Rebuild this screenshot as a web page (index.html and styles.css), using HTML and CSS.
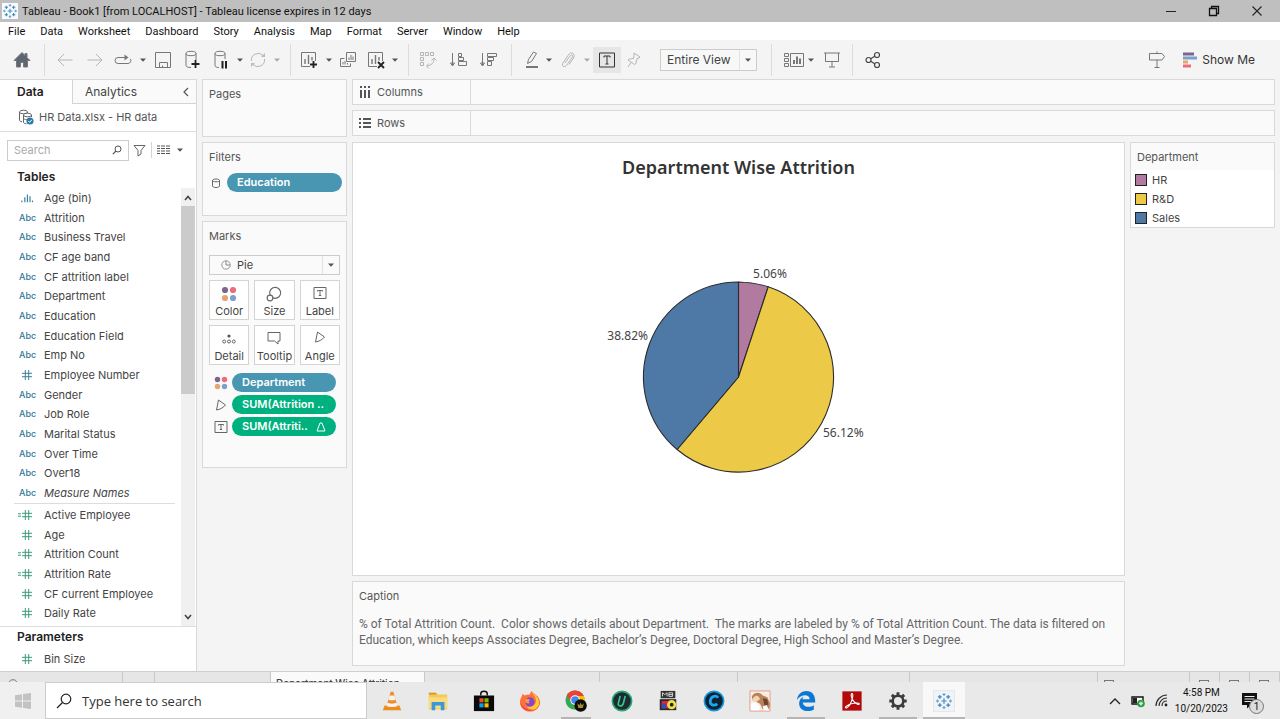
FILE: index.html
```html
<!DOCTYPE html>
<html lang="en">
<head>
<meta charset="utf-8">
<title>Tableau - Book1</title>
<link rel="stylesheet" href="styles.css">
</head>
<body>
<svg class="defs" aria-hidden="true">
  <symbol id="caret" viewBox="0 0 6 4"><path d="M0 .5h6L3 3.8z" fill="currentColor"/></symbol>
  <symbol id="hash" viewBox="0 0 12 12"><path d="M4.3 1v10M7.7 1v10M1 4.3h10M1 7.7h10" fill="none" stroke="currentColor"/></symbol>
  <symbol id="calc" viewBox="0 0 16 12"><path d="M8.3 1v10M11.7 1v10M5 4.3h10M5 7.7h10M1 4.8h3M1 7.2h3" fill="none" stroke="currentColor"/></symbol>
  <symbol id="dots" viewBox="0 0 14 14"><circle cx="3.500" cy="3.500" r="2.700" fill="#7b6591"/><circle cx="10.500" cy="3.500" r="2.700" fill="#ee6b78"/><circle cx="3.500" cy="10.500" r="2.700" fill="#eba271"/><circle cx="10.500" cy="10.500" r="2.700" fill="#7aa0cb"/></symbol>
  <symbol id="angle" viewBox="0 0 12 12"><path d="M3.500 1l7 5C8.500 8.500 5 10.500 1.500 11z" fill="none" stroke="#666"/></symbol>
  <symbol id="label" viewBox="0 0 14 14"><path d="M1 1.500h12v11H1zM4.500 5.500V4.500h5v1M7 4.500v5M5.800 9.500h2.400" fill="none" stroke="#666"/></symbol>
  <symbol id="tableau" viewBox="0 0 24 24"><g fill="none" stroke-width="1.600"><path d="M12 8.500v7M8.500 12h7" stroke="#4a8fc0"/><path d="M12 1.500v4M10 3.500h4M12 18.500v4M10 20.500h4M1.500 12h4M3.500 10v4M18.500 12h4M20.500 10v4" stroke="#6f9fc8"/><path d="M6.500 4v5M4 6.500h5M17.500 4v5M15 6.500h5M6.500 15v5M4 17.500h5M17.500 15v5M15 17.500h5" stroke="#3e86b5"/></g></symbol>
</svg>

<header class="titlebar">
  <svg class="app-icon" viewBox="0 0 24 24"><rect width="24" height="24" fill="#f7fbff"/><use href="#tableau"/></svg>
  <span class="app-title">Tableau - Book1 [from LOCALHOST] - Tableau license expires in 12 days</span>
  <div class="win-buttons">
    <button aria-label="Minimize"><svg width="12" height="12" viewBox="0 0 12 12"><path d="M1 6.500h10" stroke="#222"/></svg></button>
    <button aria-label="Restore"><svg width="12" height="12" viewBox="0 0 12 12"><path d="M1.500 3.500h7v7h-7zM3.500 3.500v-2h7v7h-2" fill="none" stroke="#111" stroke-width="1.300"/></svg></button>
    <button aria-label="Close"><svg width="12" height="12" viewBox="0 0 12 12"><path d="M1.500 1.500l9 9M10.500 1.500l-9 9" stroke="#222" stroke-width="1.100"/></svg></button>
  </div>
</header>

<nav class="menubar">
  <button>File</button><button>Data</button><button>Worksheet</button><button>Dashboard</button><button>Story</button><button>Analysis</button><button>Map</button><button>Format</button><button>Server</button><button>Window</button><button>Help</button>
</nav>

<div class="toolbar">
  <div class="group g-home">
    <button class="w44" aria-label="Start page"><svg width="18" height="18" viewBox="0 0 18 18"><path d="M9 1.500L1 9.500h2.500V16h4v-4.500h3V16h4V9.500H17L14 6.500V2.500h-2v2z" fill="#5c6672"/></svg></button>
  </div>
  <div class="group g-file">
    <button class="w30 faint" aria-label="Undo"><svg width="18" height="18" viewBox="0 0 18 18"><path d="M16.500 9H2M8 3L2 9l6 6"/></svg></button>
    <button class="w30 faint" aria-label="Redo"><svg width="18" height="18" viewBox="0 0 18 18"><path d="M1.500 9H16M10 3l6 6-6 6"/></svg></button>
    <button class="w26" aria-label="Replay"><svg width="18" height="18" viewBox="0 0 18 18"><path d="M12 6.500H4a3 3 0 0 0 0 6h10a3 3 0 0 0 2.500-4.500"/><path d="M10.500 3.500l4 3-4 3z" fill="#777" stroke="none"/></svg></button>
    <button class="w13" aria-label="Replay options"><svg class="caret"><use href="#caret"/></svg></button>
    <button class="w26" aria-label="Save"><svg width="18" height="18" viewBox="0 0 18 18"><path d="M2.500 1.500h15v15h-15zM6.500 16.500v-5h8v5M9.500 16.500v-2"/></svg></button>
    <button class="w34" aria-label="New data source"><svg width="18" height="20" viewBox="0 0 18 20"><ellipse cx="8" cy="3.500" rx="5" ry="2.200"/><path d="M3 3.500v12c0 1.300 2 2 5 2M13 3.500V10"/><path d="M12.500 10v8M8.500 14h8" stroke="#222" stroke-width="1.800"/></svg></button>
    <button class="w24" aria-label="Pause updates"><svg width="18" height="20" viewBox="0 0 18 20"><ellipse cx="8" cy="3.500" rx="5" ry="2.200"/><path d="M3 3.500v12c0 1.300 1.500 2 4 2M13 3.500V9"/><path d="M10.500 11v7.500M14 11v7.500" stroke="#222" stroke-width="2"/></svg></button>
    <button class="w13" aria-label="Update options"><svg class="caret"><use href="#caret"/></svg></button>
    <button class="w24 faint" aria-label="Refresh"><svg width="18" height="18" viewBox="0 0 18 18"><path d="M2.500 10A6.700 6.700 0 0 1 14 4.500M15.500 8A6.700 6.700 0 0 1 4 13.500"/><path d="M12 6h4V2zM6 12H2v4z" fill="#bbb" stroke="none"/></svg></button>
    <button class="w13 faint" aria-label="Refresh options"><svg class="caret"><use href="#caret"/></svg></button>
  </div>
  <div class="group g-sheet">
    <button class="w26" aria-label="New worksheet"><svg width="18" height="20" viewBox="0 0 18 20"><path d="M10 16.500H1.500v-14h14V11"/><path d="M5 14V9M8.500 14V5M12 10.500V7" stroke-width="1.400"/><path d="M13.500 11v7M10 14.500h7" stroke="#222" stroke-width="1.800"/></svg></button>
    <button class="w13" aria-label="New sheet options"><svg class="caret"><use href="#caret"/></svg></button>
    <button class="w26" aria-label="Duplicate"><svg width="18" height="18" viewBox="0 0 18 18"><path d="M7.500 1.500h9v9h-9zM10 9V6.500M12 9V4M14 9V5.500M5.500 7.500h-4v8h10v-3M4 13.500V11M6 13.500V10M8.500 13.500V12"/></svg></button>
    <button class="w30" aria-label="Clear sheet"><svg width="18" height="20" viewBox="0 0 18 20"><path d="M10 16.500H1.500v-14h14V11"/><path d="M5 14V9M8.500 14V5M12 10.500V7" stroke-width="1.400"/><path d="M11 12l6 6M17 12l-6 6" stroke="#222" stroke-width="1.800"/></svg></button>
    <button class="w8" aria-label="Clear options"><svg class="caret"><use href="#caret"/></svg></button>
  </div>
  <div class="group g-sort">
    <button class="w30 faint" aria-label="Swap"><svg width="18" height="18" viewBox="0 0 18 18"><path d="M1.500 1.500h3v3h-3zM6.500 1.500h3v3h-3zM11.500 1.500h3v3h-3zM1.500 6.500h3v3h-3zM1.500 11.500h3v3h-3zM15 8c0 4-3 6.500-7 7M12.500 9.500L15 7l2.500 2.500M10 12.500L7.500 15l2.500 2.500"/></svg></button>
    <button class="w30" aria-label="Sort ascending"><svg width="18" height="18" viewBox="0 0 18 18"><path d="M3.500 2v12M1.500 12l2 3 2-3zM9.500 2.500h3v3h-3zM9.500 6.500h5v3h-5zM9.500 10.500h8v4h-8z"/></svg></button>
    <button class="w30" aria-label="Sort descending"><svg width="18" height="18" viewBox="0 0 18 18"><path d="M3.500 2v12M1.500 12l2 3 2-3zM8.500 2.500h9v3h-9zM8.500 6.500h6v3h-6zM8.500 10.500h4v4h-4z"/></svg></button>
  </div>
  <div class="group g-format">
    <button class="w26" aria-label="Highlight"><svg width="18" height="18" viewBox="0 0 18 18"><path d="M4.500 12.500l1-4 5-7.500 3 1.500-5 8z"/><path d="M3 16h12" stroke-width="2"/></svg></button>
    <button class="w8" aria-label="Highlight options"><svg class="caret"><use href="#caret"/></svg></button>
    <button class="w30 faint" aria-label="Group members"><svg width="18" height="18" viewBox="0 0 18 18"><path d="M6 12l5-7c1.500-2 3.500-.5 2.500 1L7.500 14.500C5.500 17 2 15 4 12l5-7.500C12-.5 17 2.500 14.500 7L10 13.500"/></svg></button>
    <button class="w8 faint" aria-label="Group options"><svg class="caret"><use href="#caret"/></svg></button>
    <button class="labels-on" aria-label="Show mark labels" aria-pressed="true"><svg width="18" height="16" viewBox="0 0 18 16"><path d="M1.500 1h15v14h-15zM6 5.500V4h6v1.500M9 4v8M7.500 12h3" stroke="#333"/></svg></button>
    <button class="w26 faint" aria-label="Fix axes"><svg width="18" height="18" viewBox="0 0 18 18"><path d="M9 2l6 4-1 1-2 .5-1 5-1.500 1L3 9l1.500-1 4-.5L9 5zM6 11.500L3 16"/></svg></button>
    <div class="select fit">
      <select aria-label="Fit"><option>Entire View</option><option>Standard</option><option>Fit Width</option></select>
      <svg class="caret"><use href="#caret"/></svg>
    </div>
  </div>
  <div class="group g-cards">
    <button class="w26" aria-label="Show cards"><svg width="20" height="16" viewBox="0 0 20 16"><path d="M.5 1.500h4v3h-4zM.5 6.500h4v3h-4zM.5 11.500h4v3h-4zM6.500 1.500h13v13h-13z"/><path d="M10 12V8M13 12V4.500M16 12V6.500" stroke-width="2"/></svg></button>
    <button class="w8" aria-label="Card options"><svg class="caret"><use href="#caret"/></svg></button>
    <button class="w34" aria-label="Presentation mode"><svg width="18" height="18" viewBox="0 0 18 18"><path d="M1 2h16M2.500 2v8.500h13V2M9 10.500V16M6 16h6"/></svg></button>
  </div>
  <div class="group g-share">
    <button class="w30" aria-label="Share"><svg width="18" height="18" viewBox="0 0 18 18" class="dark"><circle cx="4.500" cy="9" r="2.500"/><circle cx="13" cy="4" r="2.500"/><circle cx="13" cy="14" r="2.500"/><path d="M6.700 7.700l4-2.500M6.700 10.300l4 2.500"/></svg></button>
  </div>
  <div class="toolbar-end">
    <button class="w26" aria-label="Data guide"><svg width="18" height="18" viewBox="0 0 18 18"><path d="M1.500 2.500H14l2.500 3-2.500 3.500H1.500zM9 .5v2M9 9v7.500M6.500 16.500h5"/></svg></button>
    <button class="show-me"><svg width="14" height="16" viewBox="0 0 14 16"><path d="M0 2h11" stroke="#7b6591" stroke-width="3"/><path d="M0 6h14" stroke="#7aa0cb" stroke-width="3"/><path d="M0 10h5" stroke="#eba271" stroke-width="3"/><path d="M0 14h8" stroke="#ee6b78" stroke-width="3"/></svg>Show Me</button>
  </div>
</div>

<main class="workspace">
  <aside class="data-pane">
    <div class="tabs">
      <button class="tab active">Data</button>
      <button class="tab">Analytics<svg width="6" height="10" viewBox="0 0 6 10"><path d="M5 1L1 5l4 4" fill="none" stroke="#555" stroke-width="1.200"/></svg></button>
    </div>
    <div class="source">
      <svg width="16" height="16" viewBox="0 0 16 16"><g fill="none" stroke="#666"><ellipse cx="5.500" cy="3" rx="4" ry="1.800"/><path d="M1.500 3v8c0 1 1 1.500 2.500 1.700M9.500 3v1"/><ellipse cx="9.500" cy="6" rx="4" ry="1.800" fill="#fff"/><path d="M5.500 6v7c0 1 1 1.800 3 1.800M13.500 6v2M5.500 9.500c1 1 3 1.200 4 1"/></g><circle cx="12" cy="12" r="3.600" fill="#2a7ca6"/><path d="M10.300 12l1.300 1.300 2.200-2.500" fill="none" stroke="#fff"/></svg>
      <span>HR Data.xlsx - HR data</span>
    </div>
    <div class="search-row">
      <label class="search"><input type="text" placeholder="Search" aria-label="Search fields"><svg width="10" height="10" viewBox="0 0 10 10"><circle cx="6" cy="4" r="3" fill="none" stroke="#555"/><path d="M4 6L.8 9.200" stroke="#555" stroke-width="1.200"/></svg></label>
      <button aria-label="Filter"><svg width="13" height="13" viewBox="0 0 13 13"><path d="M1 1.500h11L8 6.500V10l-3 2V6.500z" fill="none" stroke="#666"/></svg></button>
      <button class="view-by" aria-label="View fields"><svg width="13" height="10" viewBox="0 0 13 10"><path d="M0 1h3M4 1h4M9 1h4M0 3.500h3M4 3.500h4M9 3.500h4M0 6h3M4 6h4M9 6h4M0 8.500h3M4 8.500h4M9 8.500h4" stroke="#555"/></svg><svg class="caret"><use href="#caret"/></svg></button>
    </div>
    <h2 class="tables-head">Tables</h2>
    <div class="fields">
      <ul>
        <li><svg class="ico" viewBox="0 0 14 12"><path d="M1 9v2M4.500 5v6M7.500 2v9M10.500 4v7M13.500 9v2" stroke="#3a7f9f" stroke-width="1.400"/></svg>Age (bin)</li>
        <li><b>Abc</b>Attrition</li>
        <li><b>Abc</b>Business Travel</li>
        <li><b>Abc</b>CF age band</li>
        <li><b>Abc</b>CF attrition label</li>
        <li><b>Abc</b>Department</li>
        <li><b>Abc</b>Education</li>
        <li><b>Abc</b>Education Field</li>
        <li><b>Abc</b>Emp No</li>
        <li><svg class="ico"><use href="#hash"/></svg>Employee Number</li>
        <li><b>Abc</b>Gender</li>
        <li><b>Abc</b>Job Role</li>
        <li><b>Abc</b>Marital Status</li>
        <li><b>Abc</b>Over Time</li>
        <li><b>Abc</b>Over18</li>
        <li class="italic"><b>Abc</b>Measure Names</li>
        <li class="rule" role="separator"></li>
        <li class="measure"><svg class="ico calc"><use href="#calc"/></svg>Active Employee</li>
        <li class="measure"><svg class="ico"><use href="#hash"/></svg>Age</li>
        <li class="measure"><svg class="ico calc"><use href="#calc"/></svg>Attrition Count</li>
        <li class="measure"><svg class="ico calc"><use href="#calc"/></svg>Attrition Rate</li>
        <li class="measure"><svg class="ico"><use href="#hash"/></svg>CF current Employee</li>
        <li class="measure"><svg class="ico"><use href="#hash"/></svg>Daily Rate</li>
      </ul>
      <div class="scrollbar">
        <svg width="8" height="6" viewBox="0 0 8 6"><path d="M1 5l3-3.500L7 5" fill="none" stroke="#444" stroke-width="1.600"/></svg>
        <div class="thumb"></div>
        <svg width="8" height="6" viewBox="0 0 8 6"><path d="M1 1l3 3.500L7 1" fill="none" stroke="#444" stroke-width="1.600"/></svg>
      </div>
    </div>
    <div class="params">
      <h2>Parameters</h2>
      <ul><li class="measure"><svg class="ico"><use href="#hash"/></svg>Bin Size</li></ul>
    </div>
  </aside>

  <div class="shelves">
    <section class="card pages"><h3>Pages</h3></section>
    <section class="card filters">
      <h3>Filters</h3>
      <div class="shelf-row"><svg width="8" height="10" viewBox="0 0 8 10"><path d="M.5 2.500v5.500c0 2 7 2 7 0V2.500M.5 2.500c0-2 7-2 7 0s-7 1.500-7 0" fill="none" stroke="#666"/></svg><span class="pill blue">Education</span></div>
    </section>
    <section class="card marks">
      <h3>Marks</h3>
      <div class="select mark-type">
        <svg width="10" height="10" viewBox="0 0 10 10"><circle cx="5" cy="5" r="4.200" fill="none" stroke="#999"/><path d="M5 .8V5h4.200" fill="none" stroke="#888"/></svg>
        <select aria-label="Mark type"><option>Pie</option><option>Bar</option><option>Line</option></select>
        <svg class="caret"><use href="#caret"/></svg>
      </div>
      <div class="mark-grid">
        <button><svg width="16" height="16"><use href="#dots"/></svg>Color</button>
        <button><svg width="16" height="16" viewBox="0 0 14 14"><circle cx="8" cy="6" r="4.800" fill="none" stroke="#666"/><circle cx="3.500" cy="10.500" r="2.500" fill="#fff" stroke="#666"/></svg>Size</button>
        <button><svg width="14" height="14"><use href="#label"/></svg>Label</button>
        <button><svg width="14" height="14" viewBox="0 0 14 14"><circle cx="7" cy="5" r="1.600" fill="#555"/><g fill="none" stroke="#666"><circle cx="2.200" cy="10.500" r="1.500"/><circle cx="7" cy="10.500" r="1.500"/><circle cx="11.800" cy="10.500" r="1.500"/></g></svg>Detail</button>
        <button><svg width="14" height="14" viewBox="0 0 14 14"><path d="M1 1.500h12v8.500h-2v3L7.500 10H1z" fill="none" stroke="#666"/></svg>Tooltip</button>
        <button><svg width="12" height="12"><use href="#angle"/></svg>Angle</button>
      </div>
      <div class="encodings">
        <div class="shelf-row"><svg width="14" height="14"><use href="#dots"/></svg><span class="pill blue">Department</span></div>
        <div class="shelf-row"><svg width="14" height="12"><use href="#angle"/></svg><span class="pill green">SUM(Attrition ..</span></div>
        <div class="shelf-row"><svg width="14" height="14"><use href="#label"/></svg><span class="pill green">SUM(Attriti..<svg width="10" height="10" viewBox="0 0 10 10"><path d="M4 1h2l3 8H1z" fill="none" stroke="#fff"/></svg></span></div>
      </div>
    </section>
  </div>

  <div class="main">
    <section class="card shelf"><h3><svg width="12" height="12" viewBox="0 0 12 12"><path d="M2 4v8M6 4v8M10 4v8M2 0v2M6 0v2M10 0v2" stroke="#555" stroke-width="2"/></svg>Columns</h3></section>
    <section class="card shelf"><h3><svg width="12" height="12" viewBox="0 0 12 12"><path d="M4 2h8M4 6h8M4 10h8M0 2h2M0 6h2M0 10h2" stroke="#555" stroke-width="2"/></svg>Rows</h3></section>
    <div class="canvas">
      <div class="sheet">
        <section class="card view">
          <h1>Department Wise Attrition</h1>
          <div class="chart">
            <svg width="280" height="230" viewBox="0 0 280 230" role="img" aria-label="Attrition by department">
              <g stroke="#2b2b2b" stroke-width="1.100" stroke-linejoin="round">
                <path d="M140.500 115V20A95 95 0 0 1 170.200 24.800z" fill="#b07aa1"/>
                <path d="M140.500 115L170.200 24.800A95 95 0 1 1 79.100 187.500z" fill="#edc948"/>
                <path d="M140.500 115L79.100 187.500A95 95 0 0 1 140.500 20z" fill="#4e79a7"/>
              </g>
              <text x="172" y="16" text-anchor="middle">5.06%</text>
              <text x="50" y="78" text-anchor="end">38.82%</text>
              <text x="225" y="175">56.12%</text>
            </svg>
          </div>
        </section>
        <section class="card caption">
          <h3>Caption</h3>
          <p>% of Total Attrition Count.&nbsp; Color shows details about Department.&nbsp; The marks are labeled by % of Total Attrition Count. The data is filtered on Education, which keeps Associates Degree, Bachelor’s Degree, Doctoral Degree, High School and Master’s Degree.</p>
        </section>
      </div>
      <section class="card legend">
        <h3>Department</h3>
        <ul>
          <li><i class="hr"></i>HR</li>
          <li><i class="rd"></i>R&amp;D</li>
          <li><i class="sales"></i>Sales</li>
        </ul>
      </section>
    </div>
  </div>
</main>

<div class="sheet-tabs">
  <div class="st s1"><svg width="8" height="10" viewBox="0 0 8 10"><path d="M.5 8V3c0-3 7-3 7 0v5" fill="none" stroke="#777"/></svg></div>
  <div class="st s2"></div>
  <div class="st s3"></div>
  <a class="st current" href="#">Department Wise Attrition</a>
  <div class="st s4"></div>
  <div class="st s5"></div>
  <div class="st s6"></div>
  <div class="st s7"></div>
  <div class="st s8"><i></i></div>
  <div class="st s9"><i></i></div>
  <div class="st s9"><i></i></div>
  <div class="st s9"><i></i></div>
</div>

<footer class="taskbar">
  <button class="start" aria-label="Start"><svg width="16" height="16" viewBox="0 0 16 16"><path d="M0 2.300l7-1v6.200H0zM8 1.100L16 0v7.500H8zM0 8.500h7v6.200l-7-1zM8 8.500h8V16l-8-1.100z" fill="#c2c2c2"/></svg></button>
  <label class="os-search"><svg width="16" height="16" viewBox="0 0 16 16"><circle cx="10" cy="6" r="4.800" fill="none" stroke="#222" stroke-width="1.200"/><path d="M6.500 9.500L1 15" stroke="#222" stroke-width="1.300"/></svg><input type="text" placeholder="Type here to search" aria-label="Type here to search"></label>
  <div class="apps">
    <button aria-label="VLC"><svg viewBox="0 0 24 24"><path d="M4 17h16l2 5H2z" fill="#ef8a1d"/><path d="M10.500 2h3l4.500 16c-2 2-10 2-12 0z" fill="#f28c28"/><path d="M9.400 6h5.200l1.300 4.500c-2 1-5.800 1-7.800 0zM7 14c2.500 1.200 7.500 1.200 10 0l1 3.500c-3 1.500-9 1.500-12 0z" fill="#f3f3f3"/></svg></button>
    <button aria-label="File Explorer"><svg viewBox="0 0 24 24"><path d="M2 3h8l2 2h10v16H2z" fill="#f6c855"/><path d="M2 3h8v2H2z" fill="#d39b2d"/><path d="M2 8h20v12H2z" fill="#fbdb7b"/><path d="M5 13h14v9h-4v-5H9v5H5z" fill="#3d98d8"/></svg></button>
    <button aria-label="Microsoft Store"><svg viewBox="0 0 24 24"><path d="M8.500 6V4c0-3.500 7-3.500 7 0v2" fill="none" stroke="#111" stroke-width="1.600"/><path d="M1 6h22v17H1z" fill="#0a0a0a"/><path d="M7 9h4.500v4.500H7z" fill="#f25022"/><path d="M12.500 9H17v4.500h-4.500z" fill="#7fba00"/><path d="M7 14.500h4.500V19H7z" fill="#00a4ef"/><path d="M12.500 14.500H17V19h-4.500z" fill="#ffb900"/></svg></button>
    <button aria-label="Firefox"><svg viewBox="0 0 24 24"><path d="M4 4c1 .5 1.500 1.500 2 2 2-1 4-1.500 6-1 0-2 1-3 2-4 1 3 9 5 9 12.500C23 19 18 23.500 12 23.500S1 19 1 13C1 9.500 3 8 4 4z" fill="#ff7139"/><path d="M14 1c0 4 4 4.500 4.500 10 1 5-5 9-10 7 3 5 13 4.500 13.500-4.500C22 7 15 5 14 1z" fill="#ffcb35"/><circle cx="12" cy="13" r="5" fill="#8347cf"/><path d="M6.500 11c2-2 5-1 6 0-2 .5-2.500 1.500-1 2.500 0 2-4.500 2-5-2.500z" fill="#ff9a38"/><path d="M1.500 14c1 7 8 10 14 8-6 .5-11-2-14-8z" fill="#f0335f"/></svg></button>
    <button class="open narrow" aria-label="Chrome"><svg viewBox="0 0 24 24"><circle cx="11" cy="11" r="10.500" fill="#34a853"/><path d="M2 5.500A10.500 10.500 0 0 1 20.500 6.500H11L6.500 13z" fill="#ea4335"/><path d="M20.500 6.500A10.500 10.500 0 0 1 11 21.500l5-9-2-6z" fill="#fbbc05"/><circle cx="11" cy="11" r="5.300" fill="#fff"/><circle cx="11" cy="11" r="4.200" fill="#4285f4"/><circle cx="17" cy="17" r="6.800" fill="#0b0b08"/><path d="M13.500 14.500l1 5h5l1-5-2.200 2-1.300-3-1.300 3z" fill="#a98a35"/></svg></button>
    <button aria-label="Uninstaller"><svg viewBox="0 0 24 24"><circle cx="12" cy="12" r="10.500" fill="#1d2b33" stroke="#2aa574" stroke-width="1.800"/><path d="M10 6.500l-2 8c-.8 4 4.500 4 5.500 0l2-8" fill="none" stroke="#39c48a" stroke-width="1.800"/></svg></button>
    <button aria-label="Media converter"><svg viewBox="0 0 24 24"><path d="M4 1h16v8H4z" fill="#333"/><path d="M6 7V3l2.500 2L11 3v4M13 3h4v4h-4zM13 5h4" fill="none" stroke="#ddd"/><path d="M3 10h18v12H3z" fill="#292929"/><path d="M5 12h9v8H5z" fill="#d7263d"/><path d="M5 15h5v5H5z" fill="#314fb5"/><circle cx="16" cy="16" r="5" fill="#f0df45"/><circle cx="16" cy="16" r="2" fill="#222"/></svg></button>
    <button aria-label="Cleaner"><svg viewBox="0 0 24 24"><circle cx="12" cy="12" r="10.500" fill="#0d2233" stroke="#1697e0" stroke-width="1.800"/><path d="M16.500 8.500c-2-3-7.500-2-8.500 3s4.500 6.500 7.500 3.500" fill="none" stroke="#1ea5f2" stroke-width="3"/></svg></button>
    <button aria-label="Photo"><svg viewBox="0 0 24 24"><path d="M1 1h22v22H1z" fill="#f6ece2" stroke="#e39a90"/><path d="M3 7c3-5 9-5 12-1l5 2 3 7-1 6h-7l-3-6-8-4z" fill="#bd8156"/><path d="M5 8c3-3 6-2 7 2l-4 3-5-1z" fill="#efd6b5"/><path d="M2 15l5-2 5 5-1 4H2zM15 18l4-2 3 6h-6z" fill="#fff"/><path d="M15 9l5 1 1 6-4 1z" fill="#70432f"/></svg></button>
    <button class="open" aria-label="Edge"><svg viewBox="0 0 24 24"><path d="M2 11C3 4 7.500 1 12.500 1 19 1 22.500 6 22 13.500H8.500c.5 5.500 8 6 12 3v5c-6 3-16 2-16-7 0-3.500 2-6 5-7.500-1 1-1.300 2-1.300 3H16C16 4 6 4.500 2 11z" fill="#0a78d4"/></svg></button>
    <button aria-label="Acrobat Reader"><svg viewBox="0 0 24 24"><path d="M1.500 1.500h21v21h-21z" fill="#b30b0b"/><path d="M12 4c-2 0-.5 5.500 2 8.500s6 4 6 2.500c0-2-11-.5-15 3.500-1 2 3 1.500 5.500-4S13.500 4 12 4z" fill="none" stroke="#fff" stroke-width="1.200"/></svg></button>
    <button class="open" aria-label="Settings"><svg viewBox="0 0 24 24"><circle cx="12" cy="12" r="5.800" fill="none" stroke="#3c3c3c" stroke-width="2.800"/><path d="M12 2.500v3.500M12 18v3.500M2.500 12H6M18 12h3.500M5.300 5.300l2.500 2.500M16.200 16.200l2.500 2.500M18.700 5.300l-2.500 2.500M7.800 16.200l-2.500 2.500" stroke="#3c3c3c" stroke-width="3.200"/></svg></button>
    <button class="open focused" aria-label="Tableau"><svg viewBox="0 0 24 24"><path d="M0 0h24v24H0z" fill="#f0f4f8" stroke="#d5dce2"/><use href="#tableau" x="2" y="2" width="20" height="20"/></svg></button>
  </div>
  <div class="tray">
    <svg width="12" height="8" viewBox="0 0 12 8"><path d="M1 7l5-5 5 5" fill="none" stroke="#222" stroke-width="1.300"/></svg>
    <svg width="14" height="14" viewBox="0 0 14 14"><path d="M1 3h11v7H1z" fill="#fff" stroke="#111" stroke-width="1.400"/><path d="M2 4h4v5H2z" fill="#222"/><circle cx="10" cy="9.500" r="3.800" fill="#2f9e44"/><path d="M10 7.500v4M8.800 8.500v1.500h2.400V8.500" fill="none" stroke="#fff"/></svg>
    <svg width="13" height="13" viewBox="0 0 13 13"><path d="M1 12C1 6 6 1 12 1M4 12c0-4.500 3.500-8 8-8M7 12c0-3 2-5 5-5" fill="none" stroke="#333" stroke-width="1.200"/><circle cx="11" cy="11" r="1.400" fill="#222"/></svg>
    <div class="clock"><span>4:58 PM</span><span>10/20/2023</span></div>
    <button class="notify" aria-label="Notifications"><svg width="16" height="16" viewBox="0 0 16 16"><path d="M0 0h15v12H9l-4 3.500V12H0z" fill="#111"/><path d="M2.500 3.500h10M2.500 6h10M2.500 8.500h7" stroke="#eee"/></svg><span class="badge">1</span></button>
  </div>
</footer>
</body>
</html>
```
FILE: styles.css
```css
* { box-sizing: border-box; }
body { margin: 0; height: 100vh; display: flex; flex-direction: column; overflow: hidden; background: #f4f4f4; color: #444; font: 11px/14px Inter, "Liberation Sans", sans-serif; }
button, input, select { font: inherit; color: inherit; background: none; border: 0; padding: 0; margin: 0; border-radius: 0; }
ul { list-style: none; margin: 0; padding: 0; }
h1, h2, h3, p { margin: 0; font-weight: 400; }
svg { display: block; flex: none; }
.defs { display: none; }
.caret { width: 6px; height: 4px; color: #555; }

.titlebar { display: flex; align-items: center; height: 22px; flex: none; background: #bfbfbf; color: #111; font: 11px/14px Roboto, sans-serif; }
.app-icon { width: 16px; height: 16px; margin: 0 4px 0 2px; }
.app-title { padding-top: 1px; }
.win-buttons { display: flex; margin-left: auto; padding-right: 2px; }
.win-buttons button { width: 43px; display: flex; justify-content: center; align-items: center; height: 20px; }

.menubar { display: flex; gap: 15px; padding: 1px 0 0 8px; height: 18px; flex: none; background: #fff; color: #111; font: 11px/18px Roboto, sans-serif; }

.toolbar { display: flex; height: 39px; flex: none; padding-bottom: 1px; font-size: 12px; }
.toolbar button { display: flex; align-items: center; justify-content: center; height: 26px; }
.toolbar svg { fill: none; stroke: #777; }
.toolbar .caret { stroke: none; fill: currentColor; }
.toolbar .dark { stroke: #444; stroke-width: 1.200; }
.toolbar .faint svg { stroke: #b5b5b5; }
.toolbar .faint .caret { stroke: none; color: #aaa; }
.group { display: flex; align-items: center; border-right: 1px solid #dcdcdc; height: 32px; margin-top: 4px; }
.g-home { width: 45px; }
.g-file { width: 246px; padding-left: 5px; }
.g-sheet { width: 118px; padding-left: 5px; }
.g-sort { width: 103px; padding-left: 4px; }
.g-format { width: 260px; padding-left: 7px; }
.g-cards { width: 81px; padding-left: 9px; }
.g-share { padding-left: 5px; border: 0; }
.w8 { width: 8px; }
.w13 { width: 13px; }
.w24 { width: 24px; }
.w26 { width: 26px; }
.w30 { width: 30px; }
.w34 { width: 34px; }
.w44 { width: 44px; }
.toolbar .labels-on { width: 28px; background: #e6e6e6; margin-left: 2px; }
.select { display: flex; align-items: center; position: relative; border: 1px solid #ccc; background: #fff; }
.select select { appearance: none; width: 100%; height: 100%; }
.select .caret { position: absolute; right: 5px; pointer-events: none; }
.fit { width: 97px; height: 22px; margin-left: 13px; background: #f8f8f8; }
.fit select { padding-left: 6px; padding-bottom: 1px; }
.fit::after, .mark-type::after { content: ""; position: absolute; right: 16px; top: 0; bottom: 0; border-left: 1px solid #e2e2e2; }
.toolbar-end { display: flex; align-items: center; gap: 13px; margin-left: auto; padding: 1px 25px 0 0; }
.toolbar .show-me { gap: 5px; color: #333; }
.show-me svg { stroke: none; }

.workspace { display: flex; flex: 1; min-height: 0; }
.data-pane { display: flex; flex-direction: column; width: 197px; flex: none; background: #fff; border-right: 1px solid #d8d8d8; border-top: 1px solid #d8d8d8; }
.tabs { display: flex; height: 24px; flex: none; font-size: 12px; }
.tab { display: flex; align-items: center; justify-content: space-between; flex: 1; padding: 0 7px 0 12px; background: #fafafa; border-left: 1px solid #d4d4d4; border-bottom: 1px solid #d4d4d4; color: #444; }
.tab.active { flex: none; width: 72px; padding-left: 17px; background: #fff; border: 0; font-weight: 600; color: #222; }
.source { display: flex; align-items: center; gap: 5px; height: 28px; flex: none; padding: 0 0 2px 18px; border-bottom: 1px solid #dedede; color: #555; }
.search-row { display: flex; align-items: center; gap: 4px; height: 36px; flex: none; padding-left: 7px; }
.search { display: flex; align-items: center; width: 122px; height: 21px; border: 1px solid #ccc; padding: 0 6px; }
.search input { width: 100%; min-width: 0; outline: 0; }
.search input::placeholder { color: #aaa; opacity: 1; }
.view-by { display: flex; align-items: center; gap: 7px; height: 16px; padding-left: 5px; margin-left: 1px; border-left: 1px solid #d4d4d4; }
h2 { padding-left: 17px; font: 600 12px/20px Inter, sans-serif; color: #222; }
.tables-head { line-height: 18px; padding-bottom: 2px; }
.fields { display: flex; flex: 1; min-height: 0; }
.fields ul { display: flex; flex-direction: column; flex: 1; padding-bottom: 3px; }
.fields li { display: flex; align-items: center; flex: 1; min-height: 0; }
li b { width: 26px; margin-left: 18px; font: 500 9px/12px Inter, sans-serif; padding-left: 1px; color: #2f7797; }
.ico { width: 12px; height: 12px; margin: 0 11px 0 21px; color: #3a7f9f; }
.calc { width: 16px; margin-left: 17px; }
.measure .ico { color: #3d9a7c; }
.italic { font-style: italic; }
.fields .rule { flex: none; height: 2px; margin: 0 6px 0 14px; border-top: 1px solid #ddd; }
.scrollbar { display: flex; flex-direction: column; align-items: center; gap: 5px; width: 15px; padding: 7px 0 6px; background: #f0f0f0; border-right: 1px solid #fff; }
.thumb { width: 100%; height: 188px; background: #cbcbcb; margin-bottom: auto; }
.params { height: 45px; flex: none; border-top: 1px solid #ddd; }
.params li { display: flex; align-items: center; height: 23px; }

.shelves { display: flex; flex-direction: column; gap: 5px; width: 145px; flex: none; margin-left: 5px; }
.card { background: #fafafa; border: 1px solid #d9d9d9; }
.card h3 { font-size: 11px; line-height: 14px; color: #555; }
.shelves .card { padding: 7px 6px; }
.pages { height: 58px; }
.filters { height: 74px; }
.marks { height: 247px; }
.filters .shelf-row { margin-top: 9px; gap: 7px; padding-left: 3px; margin-right: -2px; }
.shelf-row { display: flex; align-items: center; gap: 4px; }
.pill { display: flex; align-items: center; justify-content: space-between; flex: 1; height: 19px; padding: 0 10px; border-radius: 10px; color: #fff; font: 600 11px/19px Inter, sans-serif; white-space: nowrap; }
.blue { background: #4996b2; }
.green { background: #00b180; }
.mark-type { height: 20px; margin-top: 12px; padding-left: 11px; background: #fafafa; }
.mark-type select { padding-left: 6px; }
.mark-grid { display: grid; grid-template-columns: repeat(3, 1fr); gap: 5px; margin-top: 5px; }
.mark-grid button { display: flex; flex-direction: column; align-items: center; justify-content: space-between; height: 40px; padding: 5px 0 1px; background: #fff; border: 1px solid #d4d4d4; }
.encodings { display: flex; flex-direction: column; gap: 3px; margin-top: 8px; padding: 0 4px 0 5px; }

.main { display: flex; flex-direction: column; gap: 5px; flex: 1; min-width: 0; margin: 0 5px; }
.shelf { height: 26px; flex: none; }
.shelf h3 { display: flex; align-items: center; gap: 6px; width: 118px; height: 100%; padding-left: 6px; border-right: 1px solid #d9d9d9; }
.canvas { display: flex; gap: 5px; flex: 1; align-items: flex-start; min-height: 0; padding-top: 1px; }
.sheet { display: flex; flex-direction: column; gap: 5px; flex: 1; height: 100%; padding-bottom: 5px; }
.view { display: flex; flex-direction: column; flex: 1; background: #fff; }
.view h1 { font: 600 18px/48px "Noto Sans", sans-serif; text-align: center; color: #333; }
.chart { display: flex; flex: 1; align-items: center; justify-content: center; padding: 0 2px 13px 0; }
.chart text { font: 12px "Noto Sans", sans-serif; fill: #444; }
.caption { height: 85px; padding: 7px 6px; }
.caption p { margin-top: 13px; font: 12px/16px Roboto, sans-serif; color: #666; }
.legend { width: 145px; }
.legend h3 { padding: 7px 6px 6px; }
.legend ul { background: #fff; }
.legend li { display: flex; align-items: center; gap: 5px; height: 19px; padding-left: 4px; }
.legend i { width: 12px; height: 12px; border: 1px solid #222; }
.hr { background: #b07aa1; }
.rd { background: #edc948; }
.sales { background: #4e79a7; }

.sheet-tabs { display: flex; height: 11px; flex: none; overflow: hidden; background: #e6e6e6; border-top: 1px solid #cfcfcf; }
.st { border-right: 1px solid #c8c8c8; flex: none; }
.s1 { width: 123px; padding: 7px 0 0 9px; }
.s2 { width: 32px; }
.s3 { width: 116px; }
.current { width: 154px; padding: 4px 5px; background: #fafafa; color: #444; font-weight: 500; font-size: 10px; text-decoration: none; }
.s4 { width: 175px; }
.s5 { width: 138px; }
.s6 { width: 172px; }
.s7 { width: 188px; }
.s8 { width: 92px; padding-left: 6px; }
.s9 { width: 30px; padding-left: 9px; }
.s8, .s9 { padding-top: 8px; }
.st i { display: block; width: 10px; height: 8px; border: 1px solid #777; }

.taskbar { display: flex; height: 37px; flex: none; background: #e9e9e9; }
.start { display: flex; align-items: center; justify-content: center; width: 45px; background: #f0f0f0; }
.os-search { display: flex; align-items: center; gap: 10px; width: 322px; padding-left: 10px; background: #fff; border: 1px solid #ccc; color: #333; }
.os-search input { flex: 1; outline: 0; font: 13px/20px "Open Sans", sans-serif; }
.os-search input::placeholder { color: #333; opacity: 1; }
.apps { display: flex; margin-left: 2px; }
.apps button { display: flex; align-items: center; justify-content: center; width: 46px; border: solid transparent; border-width: 0 4px; background-clip: padding-box; }
.apps svg { width: 22px; height: 22px; }
.apps .open { background-image: linear-gradient(#b5b5b5, #b5b5b5); background-size: 100% 2px; background-position: bottom; background-repeat: no-repeat; }
.apps .narrow { border-width: 0 8px; }
.apps .focused { background-color: #f8f8f8; border-width: 0 2px; }
.tray { display: flex; align-items: center; gap: 10px; margin-left: auto; padding-right: 22px; color: #111; }
.clock { display: flex; flex-direction: column; align-items: center; margin-left: -3px; font: 10px/16px Roboto, sans-serif; }
.notify { position: relative; margin-left: 4px; }
.badge { position: absolute; left: 7px; top: 6px; width: 15px; height: 15px; border: 1px solid #777; border-radius: 50%; background: #ddd; font: 10px/13px Roboto, sans-serif; text-align: center; }
```
